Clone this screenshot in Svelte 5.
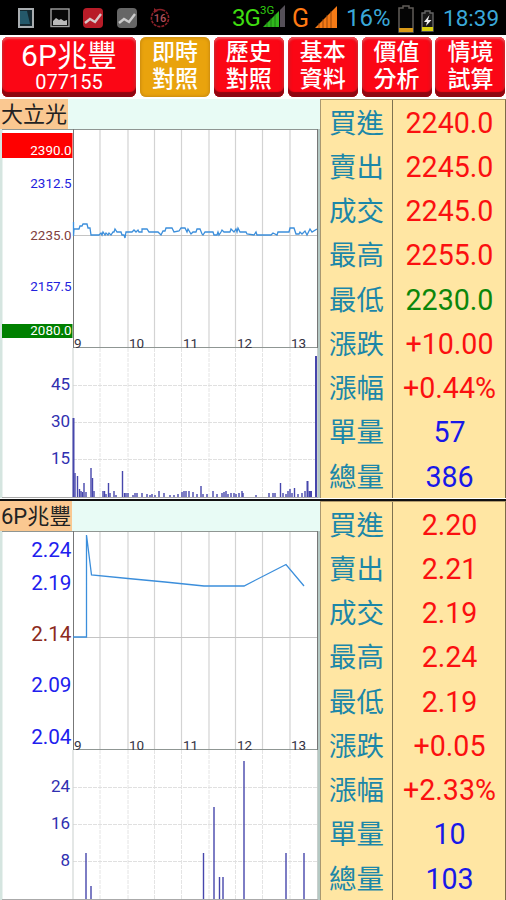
<script lang="ts">
  interface Label {
    text: string;
    y: number;
    size: number;
    color: string;
  }

  interface Panel {
    name: string;
    prices: Label[];
    volumes: Label[];
    limits: { y: number; height: number; color: string }[];
    mid: number;
    line: string;
    bars: number[][];
    quotes: { label: string; value: string; tone: string }[];
  }

  const tabs = [
    ['即時', '對照'],
    ['歷史', '對照'],
    ['基本', '資料'],
    ['價值', '分析'],
    ['情境', '試算'],
  ];

  const gridX = [100, 128, 154.5, 181.5, 209, 235.5, 262.5, 290];
  const hours = [
    { text: '9', x: 74 },
    { text: '10', x: 129 },
    { text: '11', x: 183 },
    { text: '12', x: 237 },
    { text: '13', x: 291 },
  ];

  const labels = ['買進', '賣出', '成交', '最高', '最低', '漲跌', '漲幅', '單量', '總量'];

  function quoteRows(values: string[], tones: string[]) {
    return labels.map((label, i) => ({ label, value: values[i], tone: tones[i] }));
  }

  const panels: Panel[] = [
    {
      name: '大立光',
      prices: [
        { text: '2390.0', y: 26, size: 13.4, color: '#fff' },
        { text: '2312.5', y: 59, size: 13.4, color: '#2222dd' },
        { text: '2235.0', y: 111, size: 13.4, color: '#804040' },
        { text: '2157.5', y: 162, size: 13.4, color: '#2222dd' },
        { text: '2080.0', y: 206, size: 13.4, color: '#fff' },
      ],
      volumes: [
        { text: '45', y: 261, size: 17, color: '#3030b0' },
        { text: '30', y: 298, size: 17, color: '#3030b0' },
        { text: '15', y: 335, size: 17, color: '#3030b0' },
      ],
      limits: [
        { y: 4, height: 25, color: '#ff0000' },
        { y: 195, height: 14, color: '#008000' },
      ],
      mid: 106.5,
      line:
        '73.5,93 73.5,107 74,100 79,100 80,97 82,97 83,95 87,95 88,99 90,99 91,106 99,106 101,104 102,106 103,103 105,106 106,104 108,106 109,104 111,106 113,103 114,103 115,100 117,103 121,103 122,106 124,106 125,109 126,103 132,103 134,101 136,103 138,101 139,103 142,103 142,100 147,100 149,103 158,103 161,106 163,102 165,102 166,99 172,99 174,103 179,102 181,99 185,99 187,103 188,100 191,105 193,103 196,103 197,100 200,100 202,105 203,106 205,103 213,103 214,106 217,106 218,103 219,106 221,103 222,101 224,103 230,103 231,100 234,103 236,100 237,103 238,99 240,103 246,103 247,105 254,106 256,103 257,106 271,106 273,104 277,106 278,103 289,103 290,99 294,99 296,105 299,105 300,103 302,105 305,102 307,106 310,100 312,103 317,100',
      bars: [
        [73.5, 79, 2], [75, 24], [77.5, 21], [79.5, 8], [81, 6], [82.5, 5], [84, 14], [86, 5],
        [91, 29], [92.5, 19], [94, 6], [103, 6], [104.5, 6], [106, 3], [108.5, 14], [110, 4],
        [114, 6], [116, 2], [122.5, 26], [124.5, 4], [126, 4], [128, 4], [133, 2], [135, 4],
        [137, 4], [142, 4], [147, 3], [150, 2], [152, 3], [155, 2], [159, 6], [164, 4],
        [170, 2], [174, 2], [178, 3], [182, 5], [184, 6], [186, 6], [189, 6], [193, 5],
        [197, 3], [201, 11], [203, 3], [207, 3], [213, 6], [217, 3], [222, 4], [224, 5],
        [226, 6], [228, 3], [231, 4], [234, 4], [236, 3], [239, 4], [242, 6], [243, 4],
        [256, 2], [269, 4], [273, 4], [275, 4], [280.5, 14], [283, 4], [286, 3], [288, 6],
        [290, 8], [292, 4], [294.5, 9], [298, 3], [302, 4], [305, 6], [307.5, 16, 2],
        [309.5, 6, 2], [311, 6, 2], [316, 141, 2],
      ],
      quotes: quoteRows(
        ['2240.0', '2245.0', '2245.0', '2255.0', '2230.0', '+10.00', '+0.44%', '57', '386'],
        ['up', 'up', 'up', 'up', 'down', 'up', 'up', 'vol', 'vol']
      ),
    },
    {
      name: '6P兆豐',
      prices: [
        { text: '2.24', y: 26, size: 20.7, color: '#2020ee' },
        { text: '2.19', y: 59, size: 20.7, color: '#2020ee' },
        { text: '2.14', y: 110, size: 20.7, color: '#8b2a20' },
        { text: '2.09', y: 161, size: 20.7, color: '#2020ee' },
        { text: '2.04', y: 213, size: 20.7, color: '#2020ee' },
      ],
      volumes: [
        { text: '24', y: 261, size: 17, color: '#3030b0' },
        { text: '16', y: 298, size: 17, color: '#3030b0' },
        { text: '8', y: 335, size: 17, color: '#3030b0' },
      ],
      limits: [],
      mid: 106.5,
      line: '73,106 86.5,106 86.5,4 91.5,44 128,47.5 165,51 204,55 244,55 286,33.5 304,55',
      bars: [
        [86, 46], [91, 13], [203.5, 46], [214, 92], [219.5, 22], [223, 22], [244, 138],
        [286, 46], [304, 46],
      ],
      quotes: quoteRows(
        ['2.20', '2.21', '2.19', '2.24', '2.19', '+0.05', '+2.33%', '10', '103'],
        ['up', 'up', 'up', 'up', 'up', 'up', 'up', 'vol', 'vol']
      ),
    },
  ];
</script>

<div class="screen">
  <header class="status">
    <div class="notices">
      <svg width="16" height="20" viewBox="0 0 16 20">
        <rect x="1" y="1" width="14" height="18" fill="#14272f" stroke="#a9adb0" stroke-width="2" />
        <path d="M2 3h7l3 13H2z" fill="#24586a" />
      </svg>
      <svg width="20" height="20" viewBox="0 0 20 20">
        <rect x="1" y="1" width="18" height="17.5" fill="#080808" stroke="#a0a0a0" stroke-width="1.4" />
        <path d="M3 17v-4l3-3 3 2 2-1 3 2 3-1v5z" fill="#bbb" />
      </svg>
      <svg width="20" height="20" viewBox="0 0 20 20">
        <rect width="20" height="20" rx="4" fill="#b81c28" />
        <path d="M2 15l5-4 5 3 6-8" fill="none" stroke="#d8c8c8" stroke-width="2.4" />
      </svg>
      <svg width="20" height="20" viewBox="0 0 20 20">
        <rect width="20" height="20" rx="4" fill="#666" />
        <path d="M2 15l5-4 5 3 6-8" fill="none" stroke="#ccc" stroke-width="2.4" />
      </svg>
      <svg width="20" height="20" viewBox="0 0 20 20">
        <path d="M6 2.4A8.6 8.6 0 1 0 14 2.4" fill="none" stroke="#8d2028" stroke-width="1.6" stroke-dasharray="3 1" />
        <path d="M6 2.4Q10 .6 14 2.4" fill="none" stroke="#8d2028" stroke-width="1.6" />
        <path d="M4 0v5l4-2z" fill="#8d2028" />
        <text x="10" y="14" text-anchor="middle" font-size="11" font-weight="500" fill="#b0505a">16</text>
      </svg>
    </div>
    <div class="system">
      <span class="net">3G</span>
      <svg class="signal" width="26" height="25" viewBox="0 0 26 25">
        <path d="M3 23L19 7v16z" fill="#2fb81c" />
        <path d="M7 18v5M11 14v9M15 10v13" stroke="#185c10" stroke-width=".7" />
        <path d="M20 6l5-5v22h-5z" fill="#555058" />
        <text x="0" y="10" font-size="11.500" fill="#30cc10">3G</text>
      </svg>
      <span class="roam">G</span>
      <svg class="bars" width="24" height="24" viewBox="0 0 24 24">
        <path d="M1 23L23 1v22z" fill="#f47a16" />
        <path d="M5 18v5M9 14v9M13 10v13M17 6v17" stroke="#853c08" stroke-width=".8" />
      </svg>
      <span class="percent">16%</span>
      <svg class="battery" width="16" height="28" viewBox="0 0 16 28">
        <path d="M5 3V1h6v2h4v24H1V3z" fill="#050505" stroke="#605c58" stroke-width="1.5" />
        <path d="M1 23h14v4H1z" fill="#d99a18" />
      </svg>
      <svg class="charge" width="13" height="22" viewBox="0 0 13 22">
        <path d="M4 3V1h5v2h3v18H1V3z" fill="#181818" stroke="#666" stroke-width="1.4" />
        <path d="M1 17h11v4H1z" fill="#d8d010" />
        <path d="M8.5 5L3 12h3l-1 4 5.500-6H7z" fill="#eee" />
      </svg>
      <span class="clock">18:39</span>
    </div>
  </header>

  <nav class="tabs">
    <button class="tab stock">
      <span class="stock-name">6P兆豐</span>
      <span class="stock-code">077155</span>
    </button>
    {#each tabs as [top, bottom], i}
      <button class="tab" class:active={i === 0}>
        <span>{top}</span>
        <span>{bottom}</span>
      </button>
    {/each}
  </nav>

  {#each panels as panel}
    <section class="panel">
      <div class="chart">
        <div class="title"><span>{panel.name}</span></div>
        <svg class="plot" width="320" height="369" viewBox="0 0 320 369">
          <rect width="320" height="369" fill="#fff" />
          <rect width="2.500" height="369" fill="#d5e5e0" />
          <rect x="318" width="2" height="369" fill="#b5c9c4" />

          {#each gridX as x}
            <path d="M{x} 1V219" stroke="#d3d3d3" stroke-width="1.2" />
            <path d="M{x} 219V368" stroke="#e4e4e4" stroke-dasharray="4 1" />
          {/each}
          {#each [256.5, 293.5, 330.5] as y}
            <path d="M73 {y}H317" stroke="#e0e0e0" stroke-dasharray="4 1" />
          {/each}
          <path d="M73 {panel.mid}H317" stroke="#c4c4c4" />
          <path d="M2 .5H318M73 218.500H318" stroke="#8f9693" />
          <path d="M73.500 0V219M317.500 0V219" stroke="#777" />
          <path d="M73 219V368M317.500 219V368" stroke="#c9cfcd" />
          <path d="M2 368.500H318" stroke="#aaa" />

          {#each panel.limits as limit}
            <rect x="2" y={limit.y} width="70.500" height={limit.height} fill={limit.color} />
          {/each}
          {#each [...panel.prices, ...panel.volumes] as item, i}
            <text
              x={i < 5 ? 71.5 : 70}
              y={item.y}
              font-size={item.size}
              fill={item.color}
              text-anchor="end">{item.text}</text>
          {/each}
          {#each hours as hour}
            <text x={hour.x} y="218.500" font-size="13.500" fill="#333344">{hour.text}</text>
          {/each}

          {#each panel.bars as [x, height, width = 1.4]}
            <rect x={x - width / 2} y={368 - height} {width} {height} fill="#4646ac" />
          {/each}
          <polyline points={panel.line} fill="none" stroke="#3b8edb" stroke-width="1.3" />
        </svg>
      </div>

      <div class="quotes">
        {#each panel.quotes as quote}
          <div class="label">{quote.label}</div>
          <div class="value {quote.tone}">{quote.value}</div>
        {/each}
      </div>
    </section>
  {/each}
</div>

<style>
  :global(body) {
    margin: 0;
    background: #fff;
  }

  .screen {
    width: 506px;
    height: 900px;
    overflow: hidden;
    display: flex;
    flex-direction: column;
    font-family: Roboto, 'Noto Sans CJK TC', sans-serif;
  }

  .status {
    flex: none;
    height: 35px;
    box-sizing: border-box;
    padding: 0 7px 0 18px;
    display: flex;
    align-items: center;
    justify-content: space-between;
    background: #000;
    color: #3aa8d8;
  }

  .notices {
    display: flex;
    gap: 13.500px;
    padding-top: 1px;
  }

  .notices svg:first-child {
    margin-right: 2px;
  }

  .system {
    display: flex;
    align-items: center;
    font-size: 24px;
    line-height: 35px;
    white-space: nowrap;
    padding-top: 2px;
  }

  .net {
    width: 28px;
    color: #3fdc10;
    font-size: 24px;
    letter-spacing: -1px;
  }

  .signal {
    margin: 0 6px 4px 0;
  }

  .roam {
    width: 20px;
    color: #ff7a14;
    font-size: 25px;
  }

  .bars {
    margin: 0 8px 4px 2px;
  }

  .percent {
    width: 52px;
  }

  .battery {
    margin-right: 7px;
  }

  .charge {
    margin: 5px 9px 0 0;
  }

  .clock {
    width: 56px;
    font-size: 22.500px;
  }

  .tabs {
    flex: none;
    height: 64px;
    box-sizing: border-box;
    padding: 2px 2px 2px;
    display: grid;
    grid-template-columns: 134px repeat(5, 70px);
    column-gap: 3.900px;
    background: #fff;
  }

  .tab {
    display: flex;
    flex-direction: column;
    align-items: center;
    padding: 2px 0 0;
    border: none;
    border-radius: 6px;
    background: #fb0615;
    box-shadow:
      inset 0 -5px 1px #8e0711,
      inset 0 2px 2px #f2525a,
      inset 2px 0 3px #d41823,
      inset -2px 0 3px #d41823;
    color: #fff;
    font-family: inherit;
    font-size: 23px;
    font-weight: 500;
    line-height: 27px;
  }

  .tab.stock {
    padding-top: 1px;
    font-weight: 400;
  }

  .tab.active {
    background: #e9a30d;
    box-shadow: inset 0 0 3px 1px #c98a10;
  }

  .stock-name {
    font-size: 30px;
    line-height: 35px;
  }

  .stock-code {
    font-size: 20px;
    line-height: 18px;
  }

  .panel {
    flex: none;
    display: grid;
    grid-template-columns: 320px 186px;
    height: 399px;
  }

  .panel + .panel {
    border-top: 2px solid #111;
    margin-top: 1px;
  }

  .chart {
    display: flex;
    flex-direction: column;
  }

  .title {
    height: 30px;
    background: #e8fbf5;
    font-size: 22px;
    line-height: 32px;
    color: #222;
  }

  .title span {
    display: inline-block;
    height: 30px;
    padding: 0 1px;
    background: #fac891;
  }

  .plot {
    display: block;
  }

  .quotes {
    display: grid;
    grid-template-columns: 72px 1fr;
    grid-template-rows: repeat(9, 44.250px);
    background: #ffe6a3;
    border-top: 1px solid #b09a6c;
    border-right: 1px solid #7c6a48;
    border-left: 1px solid #a99870;
    box-sizing: border-box;
    height: 399px;
  }

  .label,
  .value {
    display: flex;
    align-items: center;
    justify-content: center;
    line-height: 44px;
  }

  .label {
    box-sizing: border-box;
    padding-top: 3px;
    border-right: 1.500px solid #7d7150;
    color: #1c87a8;
    font-size: 27.500px;
  }

  .value {
    padding-left: 1px;
    padding-top: 2px;
    height: 41px;
    font-size: 28.600px;
  }

  .up {
    color: #fb1010;
  }

  .down {
    color: #0b860b;
  }

  .vol {
    color: #1818e8;
  }
</style>
